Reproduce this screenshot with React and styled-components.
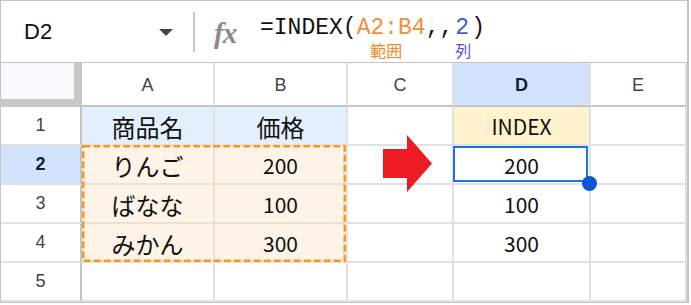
import React from "react";
import styled, { createGlobalStyle } from "styled-components";

const Global = createGlobalStyle`
  html, body { margin: 0; padding: 0; background: #fff; }
  * { box-sizing: border-box; }
`;

const Frame = styled.div`
  width: 689px;
  border-left: 1px solid #c4c4c4;
  border-top: 1px solid #c4c4c4;
  border-right: 2px solid #c4c4c4;
  border-bottom: 1px solid #c4c4c4;
  font-family: "Liberation Sans", Arial, sans-serif;
  background: #fff;
`;

const FormulaBar = styled.div`
  height: 62px;
  border-bottom: 1px solid #c4c4c4;
  display: flex;
  align-items: center;
`;

const NameBox = styled.div`
  width: 192px;
  display: flex;
  align-items: center;
  justify-content: space-between;
  padding: 0 20px 0 23px;
  font-size: 22px;
  color: #111;
`;

const Caret = styled.span`
  width: 0;
  height: 0;
  border-left: 7.5px solid transparent;
  border-right: 7.5px solid transparent;
  border-top: 7px solid #444;
  margin-top: 2px;
`;

const Divider = styled.div`
  width: 2px;
  height: 40px;
  background: #c8c8c8;
`;

const Fx = styled.span`
  font-family: "Liberation Serif", "Times New Roman", serif;
  font-style: italic;
  font-weight: bold;
  font-size: 29px;
  color: #8a8a8a;
  margin-left: 19px;
  width: 27px;
  letter-spacing: -1px;
  margin-top: 4px;
`;

const Formula = styled.div`
  align-self: flex-start;
  display: flex;
  align-items: flex-start;
  margin-left: 19px;
  margin-top: 14px;
  font-family: "Liberation Mono", "Courier New", monospace;
  font-size: 23px;
  line-height: 26px;
  color: #111;
`;

const Token = styled.span`
  display: inline-flex;
  flex-direction: column;
  align-items: center;
  color: ${(p) => p.$color || "#111"};
  white-space: pre;
`;

const Label = styled.span`
  font-family: "Noto Sans CJK JP", sans-serif;
  font-size: 16px;
  line-height: 18px;
  color: ${(p) => p.$color};
  margin-left: ${(p) => p.$shift || 0}px;
`;

const Grid = styled.div`
  position: relative;
  display: grid;
  grid-template-columns: 81px 133px 133px 106px 137px 96px;
  grid-template-rows: 44px repeat(5, 39px);
`;

const Corner = styled.div`
  background: #f8f9fa;
  border-right: 8px solid #c7c7c7;
  border-bottom: 8px solid #c7c7c7;
`;

const ColHead = styled.div`
  display: flex;
  align-items: center;
  justify-content: center;
  background: ${(p) => (p.$active ? "#d3e3fd" : "#fff")};
  border-right: 2px solid #e1e1e1;
  border-bottom: 2px solid #c4c4c4;
  font-size: 18px;
  font-weight: ${(p) => (p.$active ? "bold" : "normal")};
  color: ${(p) => (p.$active ? "#0b1f44" : "#444")};
  padding-top: 2px;
`;

const RowHead = styled.div`
  display: flex;
  align-items: center;
  justify-content: center;
  background: ${(p) => (p.$active ? "#d3e3fd" : "#fff")};
  border-right: 2px solid #c4c4c4;
  border-bottom: 2px solid #e1e1e1;
  font-size: 18px;
  font-weight: ${(p) => (p.$active ? "bold" : "normal")};
  color: ${(p) => (p.$active ? "#0b1f44" : "#444")};
`;

const Cell = styled.div`
  position: relative;
  display: flex;
  align-items: center;
  justify-content: center;
  background: ${(p) => p.$bg || "#fff"};
  border-right: 2px solid ${(p) => p.$line || "#e1e1e1"};
  border-bottom: 2px solid ${(p) => p.$line || "#e1e1e1"};
  font-family: "Noto Sans CJK JP", sans-serif;
  font-size: ${(p) => (p.$jp ? 24 : 21)}px;
  color: #111;
  padding-top: 1px;
`;

const Selection = styled.div`
  position: absolute;
  left: -1px;
  top: 0;
  right: 1px;
  bottom: 1px;
  border: 2px solid #1a73e8;
  pointer-events: none;
`;

const Handle = styled.div`
  position: absolute;
  left: 128px;
  top: 30px;
  width: 15px;
  height: 15px;
  border-radius: 50%;
  background: #0b57d0;
  z-index: 3;
`;

const Arrow = styled.svg`
  position: absolute;
  left: 35px;
  top: -11px;
  z-index: 2;
`;

const Marquee = styled.svg`
  position: absolute;
  left: 81px;
  top: 82px;
  z-index: 2;
  pointer-events: none;
`;

const BLUE = "#e3effd";
const RANGE = "#fdf3e7";
const RLINE = "#ebe0d2";

const rows = [
  [{ t: "商品名", jp: 1, bg: BLUE }, { t: "価格", jp: 1, bg: BLUE }, { t: "" }, { t: "INDEX", bg: "#fff2cc" }, { t: "" }],
  [{ t: "りんご", jp: 1, bg: RANGE, line: RLINE }, { t: "200", bg: RANGE, line: RLINE }, { t: "", arrow: 1 }, { t: "200", sel: 1 }, { t: "" }],
  [{ t: "ばなな", jp: 1, bg: RANGE, line: RLINE }, { t: "100", bg: RANGE, line: RLINE }, { t: "" }, { t: "100" }, { t: "" }],
  [{ t: "みかん", jp: 1, bg: RANGE, line: RLINE }, { t: "300", bg: RANGE, line: RLINE }, { t: "" }, { t: "300" }, { t: "" }],
  [{ t: "" }, { t: "" }, { t: "" }, { t: "" }, { t: "" }],
];

export default function App() {
  return (
    <>
      <Global />
      <Frame>
        <FormulaBar>
          <NameBox>
            <span>D2</span>
            <Caret />
          </NameBox>
          <Divider />
          <Fx>fx</Fx>
          <Formula>
            <Token>=INDEX(</Token>
            <Token $color="#f0913a">
              A2:B4
              <Label $color="#f5861f" $shift={-10}>範囲</Label>
            </Token>
            <Token>,,</Token>
            <Token $color="#3563d4">
              2
              <Label $color="#5a4fd3" $shift={2}>列</Label>
            </Token>
            <Token>)</Token>
          </Formula>
        </FormulaBar>
        <Grid>
          <Corner />
          {["A", "B", "C", "D", "E"].map((c) => (
            <ColHead key={c} $active={c === "D"}>{c}</ColHead>
          ))}
          {rows.map((r, i) => (
            <React.Fragment key={i}>
              <RowHead $active={i === 1}>{i + 1}</RowHead>
              {r.map((c, j) => (
                <Cell key={j} $bg={c.bg} $line={c.line} $jp={c.jp}>
                  {c.t}
                  {c.sel && (
                    <>
                      <Selection />
                      <Handle />
                    </>
                  )}
                  {c.arrow && (
                    <Arrow width="49" height="57" viewBox="0 0 49 57">
                      <polygon points="0,14 24,14 24,0 49,28.5 24,57 24,43 0,43" fill="#ed1c24" />
                    </Arrow>
                  )}
                </Cell>
              ))}
            </React.Fragment>
          ))}
          <Marquee width="264" height="117" viewBox="0 0 264 117">
            <rect x="1.25" y="1.25" width="261.5" height="114.5" fill="none" stroke="#f39a22" strokeWidth="2.5" strokeDasharray="7 3" />
          </Marquee>
        </Grid>
      </Frame>
    </>
  );
}
